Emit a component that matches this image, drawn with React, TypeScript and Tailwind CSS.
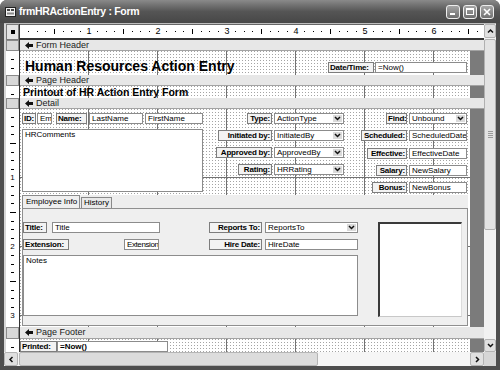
import React from 'react';

const GRID =
  'bg-white bg-[image:linear-gradient(to_right,#727272_1px,transparent_1px),conic-gradient(at_1px_1px,transparent_75%,#a4a4a4_0)] bg-size-[69px_100%,3px_3px] bg-position-[68px_0,0_0]';
const GRID_DETAIL =
  'bg-white bg-[image:linear-gradient(to_right,#727272_1px,transparent_1px),linear-gradient(to_bottom,#727272_1px,transparent_1px),conic-gradient(at_1px_1px,transparent_75%,#a4a4a4_0)] bg-size-[69px_100%,100%_69px,3px_3px] bg-position-[68px_0,0_68px,0_0]';

function Chevron({ dir }: { dir: 'up' | 'down' | 'left' | 'right' }) {
  const d = {
    up: 'M1 4.5L3.5 2L6 4.5',
    down: 'M1 2L3.5 4.5L6 2',
    left: 'M4.5 1L2 3.5L4.5 6',
    right: 'M2 1L4.5 3.5L2 6',
  }[dir];
  return (
    <svg width="7" height="7" viewBox="0 0 7 7">
      <path d={d} fill="none" stroke="#111" strokeWidth="1.5" />
    </svg>
  );
}

function TitleBar() {
  return (
    <div className="h-[23px] flex items-center bg-gradient-to-b from-[#8a8a8a] via-[#555555] to-[#474747]">
      <svg width="11" height="10" viewBox="0 0 11 10" className="ml-[5px] shrink-0">
        <rect x="0.5" y="0.5" width="10" height="9" fill="#f2f2f2" stroke="#222" />
        <rect x="2" y="2" width="3" height="2" fill="#444" />
        <rect x="6" y="2" width="3" height="2" fill="#444" />
        <rect x="2" y="5.5" width="7" height="2" fill="#888" />
      </svg>
      <span className="ml-[3px] text-white font-bold text-[10.5px] tracking-[-0.3px]">
        frmHRActionEntry : Form
      </span>
      <div className="flex-1" />
      <div className="flex gap-[3px] mr-[6px]">
        <div className="w-[14px] h-[14px] rounded-[3px] border border-[#eeeeee] bg-gradient-to-b from-[#a5a5a5] to-[#6f6f6f] flex items-end pl-[3px] pb-[3px]">
          <div className="w-[5px] h-[2px] bg-white" />
        </div>
        <div className="w-[14px] h-[14px] rounded-[3px] border border-[#eeeeee] bg-gradient-to-b from-[#a5a5a5] to-[#6f6f6f] flex items-center justify-center">
          <div className="w-[8px] h-[7px] border border-white border-t-2" />
        </div>
        <div className="w-[14px] h-[14px] rounded-[3px] border border-[#eeeeee] bg-gradient-to-b from-[#a8a8a8] to-[#727272] flex items-center justify-center">
          <svg width="8" height="8" viewBox="0 0 8 8">
            <path d="M1 1L7 7M7 1L1 7" stroke="#fff" strokeWidth="1.6" />
          </svg>
        </div>
      </div>
    </div>
  );
}

function RulerRow() {
  const cells = Array.from({ length: 54 }, (_, i) => i + 1);
  return (
    <div className="flex h-[16px]">
      <div className="w-[16px] flex pl-[2px]">
        <div className="w-[13px] bg-[#e4e4e4] border border-[#7a7a7a] flex items-center justify-center">
          <div className="w-[4px] h-[4px] bg-black" />
        </div>
        <div className="w-px bg-[#333]" />
      </div>
      <div className="flex-1 flex bg-white border-t border-[#666] border-b-2 border-b-[#333] overflow-hidden">
        <div className="w-[4.3125px] shrink-0" />
        {cells.map((i) => (
          <div key={i} className="w-[8.625px] shrink-0 flex items-center justify-center">
            {i % 8 === 0 ? (
              <span className="text-[9px] leading-none text-black">{i / 8}</span>
            ) : i % 4 === 0 ? (
              <span className="w-px h-[5px] bg-black" />
            ) : (
              <span className="w-px h-px bg-black" />
            )}
          </div>
        ))}
      </div>
    </div>
  );
}

function SectionIcon() {
  return (
    <svg width="8" height="7" viewBox="0 0 8 7" className="shrink-0">
      <path d="M0 3.5L4 0V2H8V5H4V7Z" fill="#111" />
    </svg>
  );
}

function SectionBar({ label, tall }: { label: string; tall?: boolean }) {
  return (
    <div className={tall ? 'flex h-[12px]' : 'flex h-[11px]'}>
      <div className="w-[16px] flex pl-[2px]">
        <div className="w-[13px] bg-[#d8d8d8] border border-[#8a8a8a]" />
        <div className="w-px bg-[#333]" />
      </div>
      <div className="flex-1 flex items-center gap-[3px] pl-[5px] bg-[#e7e7e7] border-b border-[#a3a3a3] text-[9px] leading-none text-[#1a1a1a]">
        <SectionIcon />
        {label}
      </div>
    </div>
  );
}

function VRuler({ cells }: { cells: number }) {
  const list = Array.from({ length: cells }, (_, i) => i + 1);
  return (
    <div className="w-[16px] flex pl-[2px]">
      <div className="w-[13px] bg-white flex flex-col overflow-hidden">
        <div className="h-[4.3125px] shrink-0" />
        {list.map((i) => (
          <div key={i} className="h-[8.625px] shrink-0 flex items-center justify-center">
            {i % 8 === 0 ? (
              <span className="text-[8px] leading-none text-black">{i / 8}</span>
            ) : i % 4 === 0 ? (
              <span className="w-[6px] h-px bg-black" />
            ) : (
              <span className="w-[3px] h-px bg-black" />
            )}
          </div>
        ))}
      </div>
      <div className="w-px bg-[#333]" />
    </div>
  );
}

function SectionBody({
  heightClass,
  cells,
  gridClass,
  children,
}: {
  heightClass: string;
  cells: number;
  gridClass: string;
  children?: React.ReactNode;
}) {
  return (
    <div className={`flex ${heightClass}`}>
      <VRuler cells={cells} />
      <div className={`w-[450px] ${gridClass}`}>{children}</div>
      <div className="flex-1 bg-[#7b7b7b]" />
    </div>
  );
}

function Label({ text, className, left }: { text: string; className: string; left?: boolean }) {
  return (
    <div
      className={`h-[11px] shrink-0 border border-[#7d7d7d] bg-[#f3f3f3] font-bold text-[8px] leading-[9px] tracking-[-0.2px] whitespace-nowrap overflow-hidden px-[1px] ${
        left ? 'text-left' : 'text-right'
      } ${className}`}
    >
      {text}
    </div>
  );
}

function TextBox({ text, className, bold }: { text: string; className: string; bold?: boolean }) {
  return (
    <div
      className={`h-[11px] shrink-0 border border-[#8c8c8c] bg-white text-[8px] leading-[9px] whitespace-nowrap overflow-hidden pl-[2px] ${
        bold ? 'font-bold' : ''
      } ${className}`}
    >
      {text}
    </div>
  );
}

function Combo({ text, className }: { text: string; className: string }) {
  return (
    <div className={`h-[11px] shrink-0 flex border border-[#8c8c8c] bg-white ${className}`}>
      <div className="flex-1 text-[8px] leading-[9px] whitespace-nowrap overflow-hidden pl-[2px]">{text}</div>
      <div className="w-[9px] m-px bg-[#dadada] flex items-center justify-center">
        <Chevron dir="down" />
      </div>
    </div>
  );
}

function MidRow({ label, labelW, value }: { label: string; labelW: string; value: string }) {
  return (
    <div className="flex justify-end">
      <Label text={label} className={labelW} />
      <Combo text={value} className="ml-[2px] w-[70px]" />
    </div>
  );
}

function RightRow({
  label,
  labelW,
  value,
  combo,
}: {
  label: string;
  labelW: string;
  value: string;
  combo?: boolean;
}) {
  return (
    <div className="flex justify-end">
      <Label text={label} className={labelW} />
      {combo ? (
        <Combo text={value} className="ml-[2px] w-[58px]" />
      ) : (
        <TextBox text={value} className="ml-[2px] w-[58px]" />
      )}
    </div>
  );
}

function Detail() {
  return (
    <div className="flex flex-col">
      <div className="h-[86px] flex pt-[4px]">
        <div className="ml-[2px] w-[181px] flex flex-col">
          <div className="flex">
            <Label text="ID:" className="w-[14px]" left />
            <TextBox text="Emp" className="ml-[1px] w-[15px]" />
            <Label text="Name:" className="ml-[4px] w-[31px]" left />
            <TextBox text="LastName" className="ml-[2px] w-[54px]" />
            <TextBox text="FirstName" className="ml-[2px] w-[58px]" />
          </div>
          <div className="mt-[5px] h-[63px] border border-[#8c8c8c] bg-white text-[8px] leading-[10px] pl-[2px]">
            HRComments
          </div>
        </div>
        <div className="ml-[7px] w-[134px] flex flex-col gap-[6px]">
          <MidRow label="Type:" labelW="w-[25px]" value="ActionType" />
          <MidRow label="Initiated by:" labelW="w-[54px]" value="InitiatedBy" />
          <MidRow label="Approved by:" labelW="w-[56px]" value="ApprovedBy" />
          <MidRow label="Rating:" labelW="w-[34px]" value="HRRating" />
        </div>
        <div className="ml-[17px] w-[106px] flex flex-col gap-[6.3px]">
          <RightRow label="Find:" labelW="w-[21px]" value="Unbound" combo />
          <RightRow label="Scheduled:" labelW="w-[46px]" value="ScheduledDate" />
          <RightRow label="Effective:" labelW="w-[40px]" value="EffectiveDate" />
          <RightRow label="Salary:" labelW="w-[31px]" value="NewSalary" />
          <RightRow label="Bonus:" labelW="w-[35px]" value="NewBonus" />
        </div>
      </div>
      <div className="ml-[2px] w-[446px] flex flex-col bg-[#eeeeee]">
        <div className="h-[13px] flex items-end">
          <div className="w-[58px] h-[13px] border border-b-0 border-[#8a8a8a] bg-[#efefef] text-[8px] leading-[11px] pl-[3px] whitespace-nowrap">
            Employee Info
          </div>
          <div className="ml-px w-[31px] h-[11px] border border-b-0 border-[#8a8a8a] bg-[#e9e9e9] text-[8px] leading-[10px] pl-[2px]">
            History
          </div>
        </div>
        <div className="h-[118px] border border-[#8f8f8f] bg-[#efefef] flex pt-[13px]">
          <div className="w-[335px] flex flex-col">
            <div className="flex">
              <Label text="Title:" className="w-[24px]" left />
              <TextBox text="Title" className="ml-[5px] w-[108px]" />
              <Label text="Reports To:" className="ml-[49px] w-[53px]" />
              <Combo text="ReportsTo" className="ml-[3px] w-[93px]" />
            </div>
            <div className="flex mt-[6px]">
              <Label text="Extension:" className="w-[46px]" left />
              <TextBox text="Extension" className="ml-[55px] w-[35px] pl-[1px] tracking-[-0.4px]" />
              <Label text="Hire Date:" className="ml-[50px] w-[53px]" />
              <TextBox text="HireDate" className="ml-[3px] w-[93px]" />
            </div>
            <div className="mt-[5px] h-[61px] border border-[#8c8c8c] bg-white text-[8px] leading-[10px] pl-[2px]">
              Notes
            </div>
          </div>
          <div className="ml-[20px] w-[84px] h-[95px] bg-white border-l-2 border-t-2 border-[#3a3a3a] border-r border-b border-r-[#dcdcdc] border-b-[#c8c8c8]" />
        </div>
      </div>
    </div>
  );
}

function VScroll() {
  return (
    <div className="w-[12px] flex flex-col bg-[#f1f1f1]">
      <div className="h-px bg-[#bdbdbd]" />
      <div className="h-[14px] rounded-[2px] bg-[#e0e0e0] border border-[#b3b3b3] flex items-center justify-center">
        <Chevron dir="up" />
      </div>
      <div className="mt-px h-[191px] rounded-[2px] bg-[#e3e3e3] border border-[#b0b0b0] flex flex-col items-center justify-center gap-px">
        <div className="w-[5px] h-px bg-[#9a9a9a]" />
        <div className="w-[5px] h-px bg-[#9a9a9a]" />
        <div className="w-[5px] h-px bg-[#9a9a9a]" />
        <div className="w-[5px] h-px bg-[#9a9a9a]" />
      </div>
      <div className="flex-1" />
      <div className="h-[13px] rounded-[2px] bg-[#e0e0e0] border border-[#b3b3b3] flex items-center justify-center">
        <Chevron dir="down" />
      </div>
    </div>
  );
}

function HScroll() {
  return (
    <div className="h-[14px] flex bg-[#f6f6f6]">
      <div className="w-[14px] rounded-[2px] bg-[#e0e0e0] border border-[#b3b3b3] flex items-center justify-center">
        <Chevron dir="left" />
      </div>
      <div className="ml-px w-[299px] rounded-[2px] bg-[#dcdcdc] border border-[#b5b5b5]" />
      <div className="flex-1" />
      <div className="w-[14px] rounded-[2px] bg-[#e0e0e0] border border-[#b3b3b3] flex items-center justify-center">
        <Chevron dir="right" />
      </div>
      <div className="w-[12px] bg-[#d6d6d6]" />
    </div>
  );
}

export default function App() {
  return (
    <div className="w-[500px] h-[370px] bg-white font-['Liberation_Sans',Arial,sans-serif] text-black">
      <div className="w-[500px] h-[370px] flex flex-col rounded-t-[7px] bg-[#4e4e4e] overflow-hidden">
        <TitleBar />
        <div className="h-[343px] flex flex-col mx-[4px] bg-[#d6d6d6]">
          <div className="flex h-[329px]">
            <div className="w-[480px] flex flex-col">
              <div className="h-px bg-[#bdbdbd]" />
              <RulerRow />
              <SectionBar label="Form Header" />
              <SectionBody heightClass="h-[24px]" cells={2} gridClass={GRID}>
                <div className="flex items-start">
                  <div className="ml-[5px] mt-[8px] text-[14px] leading-[14px] font-bold whitespace-nowrap">
                    Human Resources Action Entry
                  </div>
                  <div className="flex-1" />
                  <div className="flex mt-[11px] mr-[3px]">
                    <Label text="Date/Time:" className="w-[46px]" left />
                    <TextBox text="=Now()" className="ml-px w-[92px]" />
                  </div>
                </div>
              </SectionBody>
              <SectionBar label="Page Header" />
              <SectionBody heightClass="h-[12px]" cells={1} gridClass={GRID}>
                <div className="ml-[3px] text-[10.5px] leading-[12px] font-bold whitespace-nowrap">
                  Printout of HR Action Entry Form
                </div>
              </SectionBody>
              <SectionBar label="Detail" />
              <SectionBody heightClass="h-[218px]" cells={24} gridClass={GRID_DETAIL}>
                <Detail />
              </SectionBody>
              <SectionBar label="Page Footer" tall />
              <SectionBody heightClass="h-[13px]" cells={1} gridClass={GRID}>
                <div className="flex pt-[2px]">
                  <Label text="Printed:" className="w-[37px]" left />
                  <TextBox text="=Now()" className="w-[111px]" bold />
                </div>
              </SectionBody>
            </div>
            <VScroll />
          </div>
          <HScroll />
        </div>
      </div>
    </div>
  );
}
